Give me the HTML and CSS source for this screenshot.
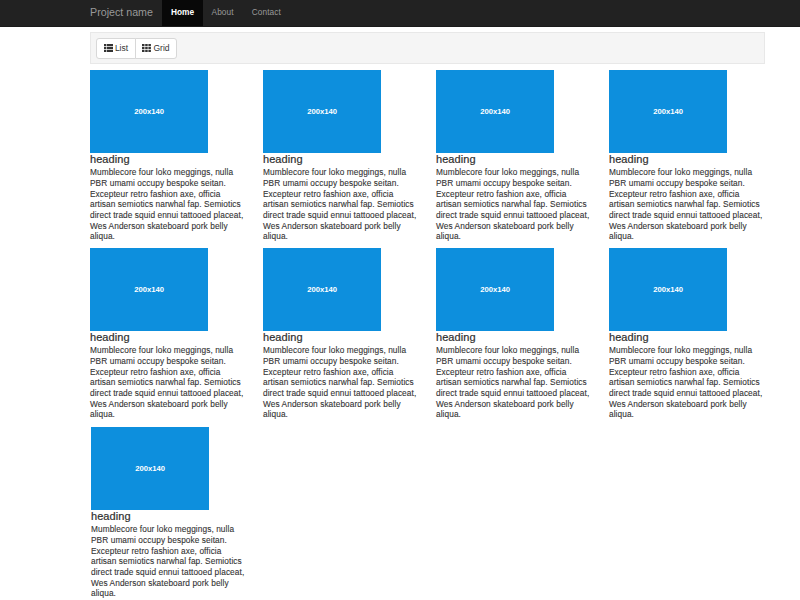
FILE: index.html
```
<!DOCTYPE html>
<html lang="en">
<head>
<meta charset="utf-8">
<title>Project name</title>
<link rel="stylesheet" href="styles.css">
</head>
<body>
<nav class="navbar">
  <a class="brand">Project name</a>
  <a class="nav-link active">Home</a>
  <a class="nav-link">About</a>
  <a class="nav-link">Contact</a>
</nav>
<main class="container">
  <div class="well">
    <div class="btn-group">
      <button class="btn"><svg class="icon" viewBox="0 0 9 8"><path d="M0 0h2.4v2.2H0zM3 0h6v2.2H3zM0 2.9h2.4v2.2H0zM3 2.9h6v2.2H3zM0 5.8h2.4V8H0zM3 5.8h6V8H3z"/></svg>List</button>
      <button class="btn"><svg class="icon" viewBox="0 0 9 8"><path d="M0 0h2.5v2.2H0zM3.2 0h2.5v2.2H3.2zM6.4 0h2.5v2.2H6.4zM0 2.9h2.5v2.2H0zM3.2 2.9h2.5v2.2H3.2zM6.4 2.9h2.5v2.2H6.4zM0 5.8h2.5V8H0zM3.2 5.8h2.5V8H3.2zM6.4 5.8h2.5V8H6.4z"/></svg>Grid</button>
    </div>
  </div>
  <div class="products" id="products"></div>
</main>
<script src="products.js"></script>
</body>
</html>
```
FILE: products.js
```
const lines = [
  "Mumblecore four loko meggings, nulla",
  "PBR umami occupy bespoke seitan.",
  "Excepteur retro fashion axe, officia",
  "artisan semiotics narwhal fap. Semiotics",
  "direct trade squid ennui tattooed placeat,",
  "Wes Anderson skateboard pork belly",
  "aliqua."
];
const card = `<article class="card"><div class="thumb">200x140</div><h4 class="heading">heading</h4><p class="text">${lines.join("<br>")}</p></article>`;
document.getElementById("products").innerHTML = card.repeat(9);
```
FILE: styles.css
```
* { box-sizing: border-box; }
body {
  margin: 0;
  height: 600px;
  overflow: hidden;
  background: #fff;
  color: #333;
  font-family: "Liberation Sans", Arial, sans-serif;
  font-size: 8.3px;
}
.navbar {
  display: flex;
  height: 27px;
  padding-left: 90px;
  background: #222;
  border-bottom: 1px solid #1b1b1b;
  line-height: 24px;
  color: #999;
}
.brand { width: 72px; font-size: 10.7px; white-space: nowrap; }
.nav-link { padding: 0 9px; letter-spacing: 0.1px; }
.nav-link.active {
  width: 40.5px;
  background: #080808;
  color: #fff;
  font-weight: bold;
  letter-spacing: 0;
}
.container { width: 675px; margin: 5px 0 0 90px; }
.well {
  height: 32px;
  padding: 5px;
  background: #f5f5f5;
  border: 1px solid #e8e8e8;
}
.btn-group { display: flex; width: 82px; height: 21px; }
.btn {
  display: flex;
  align-items: center;
  justify-content: center;
  gap: 2px;
  width: 40px;
  padding: 0 0 1px;
  background: #fff;
  border: 1px solid #d8d8d8;
  border-radius: 3px 0 0 3px;
  font: inherit;
  font-size: 8.5px;
  color: #333;
}
.btn + .btn { width: 42px; margin-left: -1px; border-radius: 0 3px 3px 0; }
.icon { width: 9px; height: 8px; fill: #333; }
.products {
  display: grid;
  grid-template-columns: repeat(4, 173px);
  grid-auto-rows: 178px;
  margin-top: 6px;
}
.card:last-child { padding: 1px 0 0 1px; }
.thumb {
  width: 118.3px;
  height: 83px;
  background: #0d8fdd;
  color: #fff;
  font-size: 7.7px;
  font-weight: bold;
  line-height: 83px;
  text-align: center;
}
.heading {
  height: 14.2px;
  margin: 0;
  font-size: 11px;
  font-weight: 500;
  line-height: 13px;
  letter-spacing: 0.06px;
  -webkit-text-stroke: 0.2px #222;
}
.text {
  margin: 0;
  line-height: 10.7px;
  letter-spacing: 0.08px;
  white-space: nowrap;
  -webkit-text-stroke: 0.1px #333;
}
```
